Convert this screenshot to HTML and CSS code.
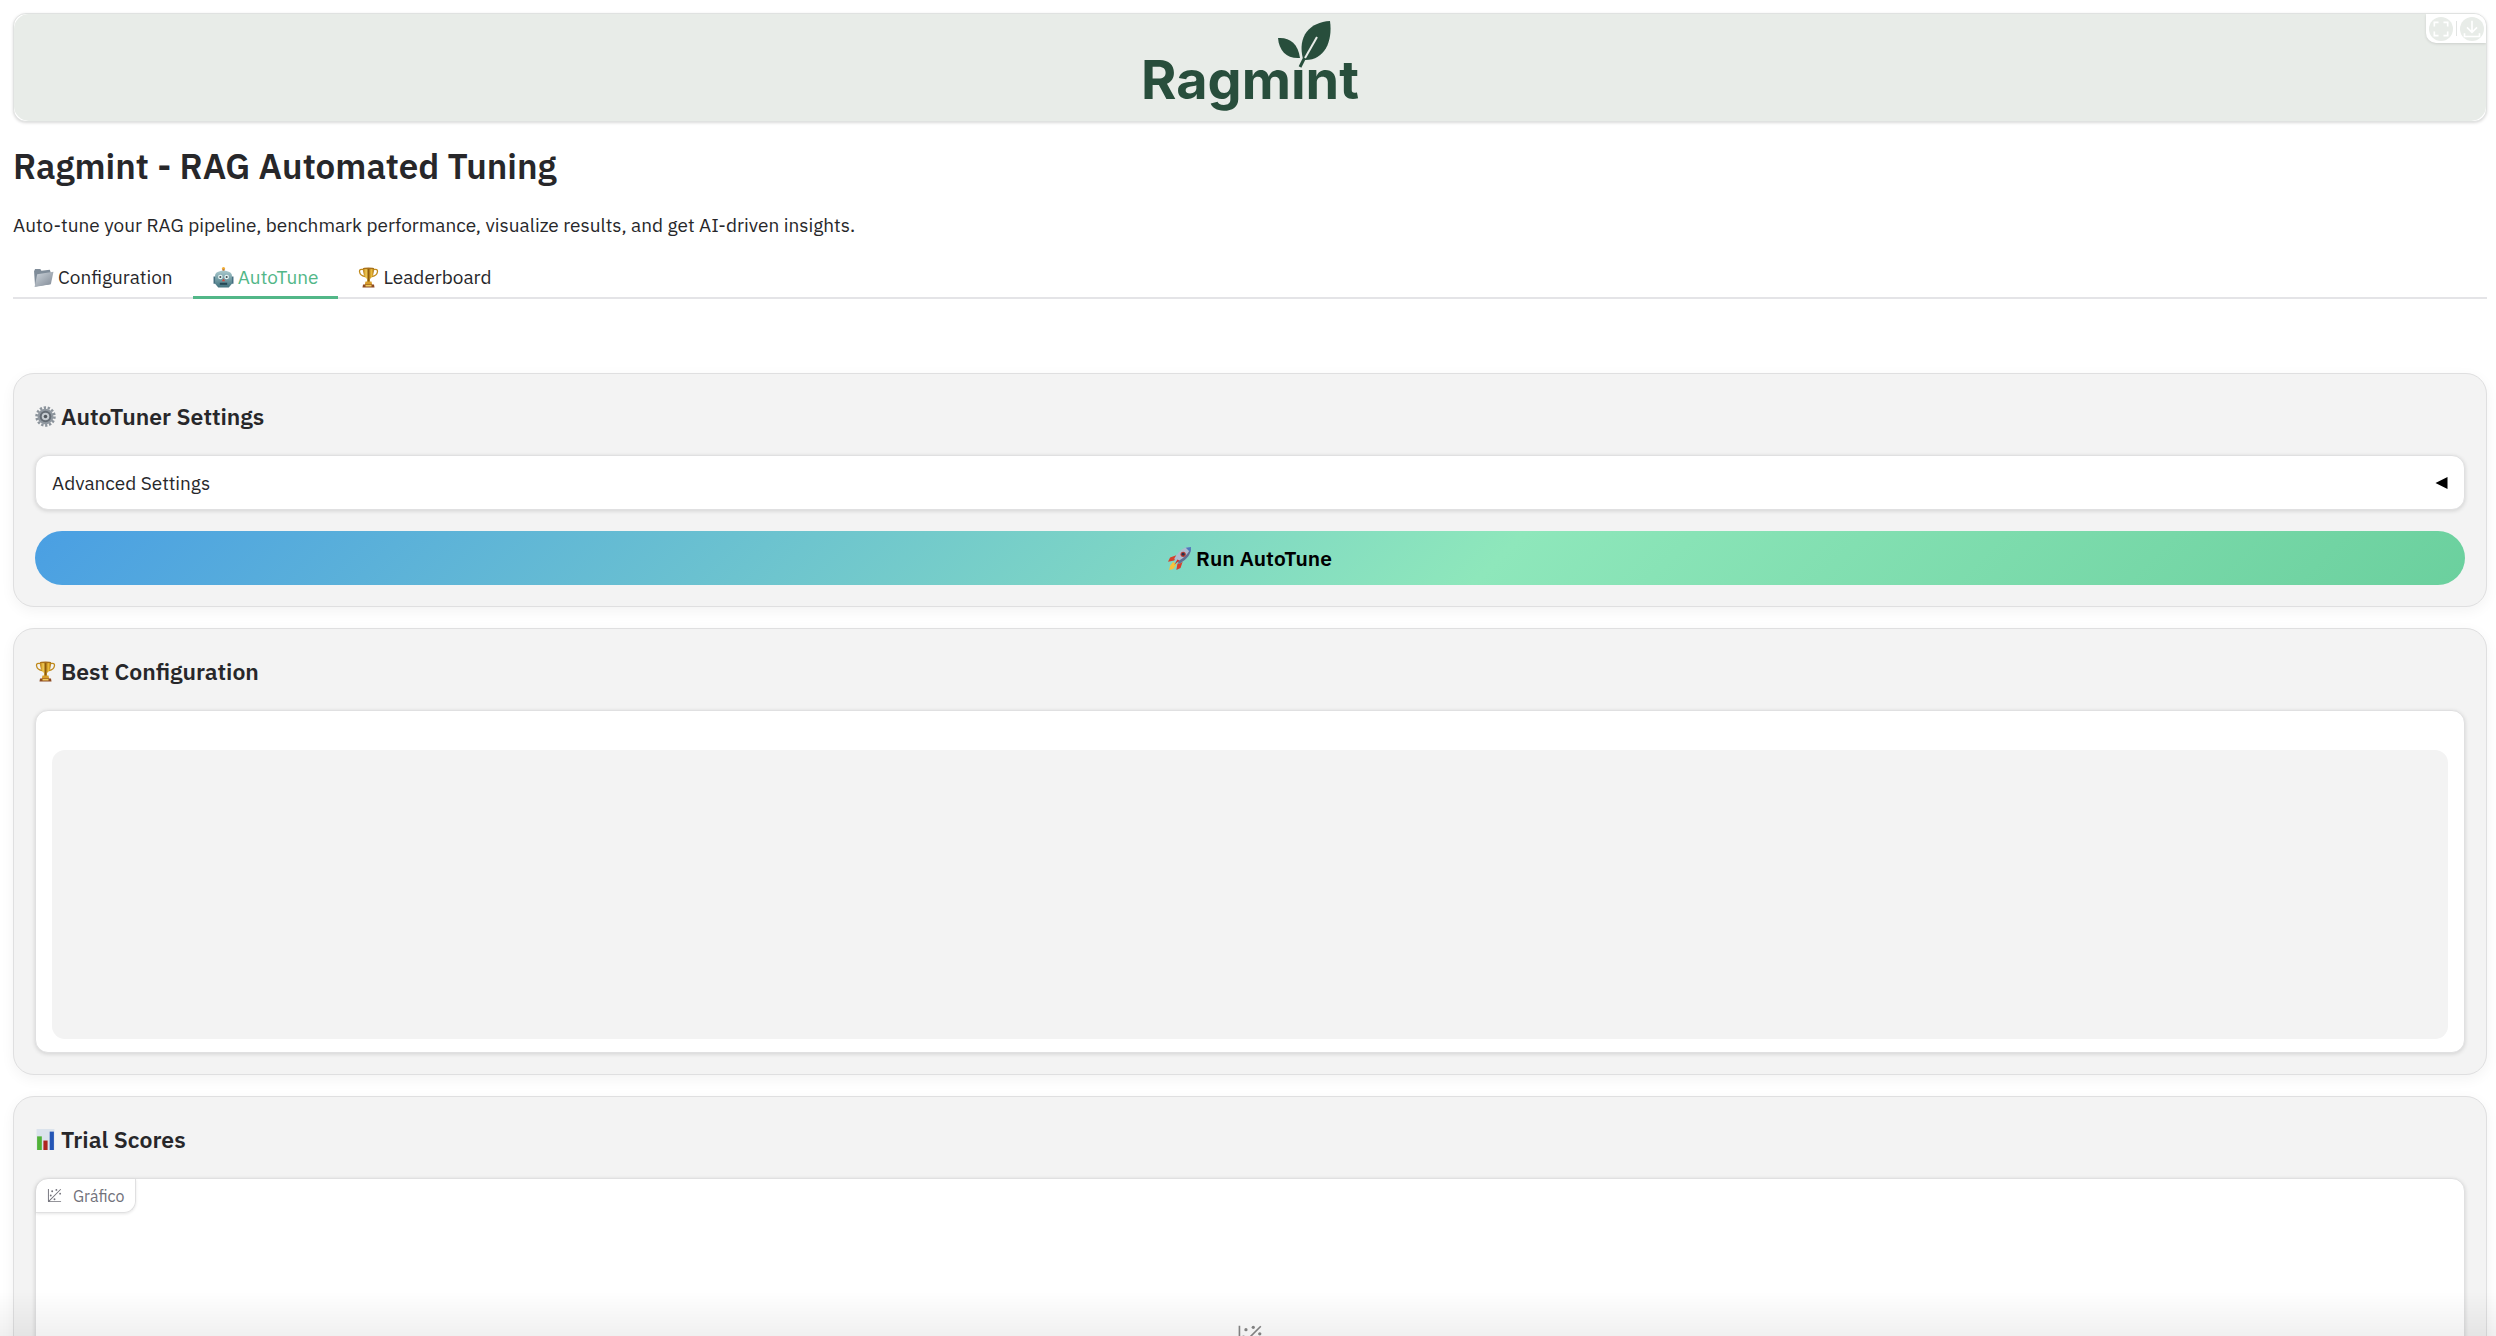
FILE: index.html
```html
<!DOCTYPE html>
<html lang="en">
<head>
    <meta charset="UTF-8">
    <meta name="viewport" content="width=device-width, initial-scale=1.0">
    <title>Ragmint</title>
    <link rel="stylesheet" href="styles.css">
</head>
<body>
    <!-- shared icons -->
    <svg class="defs" width="0" height="0" aria-hidden="true">
        <defs>
            <linearGradient id="gold" x1="0" x2="1" y1="0" y2="0">
                <stop offset="0" stop-color="#b5770f"/>
                <stop offset="0.3" stop-color="#f5cf56"/>
                <stop offset="0.5" stop-color="#8d5a0c"/>
                <stop offset="0.75" stop-color="#efbf3c"/>
                <stop offset="1" stop-color="#a8700f"/>
            </linearGradient>
            <linearGradient id="steel" x1="0" x2="1" y1="0" y2="1">
                <stop offset="0" stop-color="#cfd6dd"/>
                <stop offset="1" stop-color="#7e8894"/>
            </linearGradient>
            <linearGradient id="teal" x1="0" x2="0" y1="0" y2="1">
                <stop offset="0" stop-color="#a9c9cd"/>
                <stop offset="1" stop-color="#41727e"/>
            </linearGradient>
        </defs>
        <symbol id="trophy" viewBox="0 0 20 21">
            <path d="M5 2.500C2 2 .8 2.600 1 4.500c.3 2.500 2.500 4.500 5.500 5M15 2.500c3-.5 4.200.1 4 2-.3 2.500-2.500 4.500-5.500 5" fill="none" stroke="#c08a1c" stroke-width="1.300"/>
            <path d="M4.500 1h11c.2 5-1 9-4 11v3h-3v-3c-3-2-4.200-6-4-11z" fill="url(#gold)"/>
            <ellipse cx="10" cy="1.300" rx="5.500" ry=".9" fill="#a8701a"/>
            <path d="M7 14.500h6l.8 3.500H6.200z" fill="#d79d2a"/>
            <path d="M4.500 17.500h11l.5 3H4z" fill="#8d4b22"/>
            <path d="M7 18h6v1.500H7z" fill="#f0cc5d"/>
        </symbol>
        <symbol id="plot" viewBox="0 0 32 32">
            <circle cx="20" cy="4" r="2" fill="currentColor"/>
            <circle cx="8" cy="16" r="2" fill="currentColor"/>
            <circle cx="28" cy="12" r="2" fill="currentColor"/>
            <circle cx="11" cy="7" r="2" fill="currentColor"/>
            <circle cx="16" cy="24" r="2" fill="currentColor"/>
            <path fill="currentColor" d="M30 3.413 28.586 2 4 26.585V2H2v26a2 2 0 0 0 2 2h26v-2H5.413Z"/>
        </symbol>
    </svg>

    <main class="app">
        <header class="banner">
            <div class="logo">
                <span>Ragm&#305;nt</span>
                <svg class="leaf" viewBox="0 0 56 48" aria-hidden="true">
                    <path d="M1 18c11-1 20 5 22 20C10 39 2 31 1 18z"/>
                    <path d="M53 1C33 2 20 16 26 39l1 1c20 1 29-18 26-39z"/>
                    <path d="M27 39l-4 8" stroke="#284e3c" stroke-width="3"/>
                    <path d="M28 38L40 17" stroke="#e8ece8" stroke-width="2"/>
                </svg>
            </div>
            <div class="toolbar">
                <button type="button" aria-label="Fullscreen">
                    <svg viewBox="0 0 24 24"><path d="M4 9V4h5M15 4h5v5M20 15v5h-5M9 20H4v-5"/></svg>
                </button>
                <span class="divider"></span>
                <button type="button" aria-label="Download">
                    <svg viewBox="0 0 24 24"><path d="M12 2v14M6 10l6 6 6-6M3 17v4h18v-4"/></svg>
                </button>
            </div>
        </header>

        <h1>Ragmint - RAG Automated Tuning</h1>
        <p class="intro">Auto-tune your RAG pipeline, benchmark performance, visualize results, and get AI-driven insights.</p>

        <nav class="tabs" role="tablist">
            <button type="button" class="tab" role="tab">
                <svg class="emoji" viewBox="0 0 20 20" aria-hidden="true">
                    <path d="M1 4l1-2h5l1 1.500 8-1 1 3-1 11-14 2z" fill="#7f8c99"/>
                    <path d="M4 7l15.500-2.500-2.500 12L1.500 19z" fill="url(#steel)"/>
                </svg>
                Configuration
            </button>
            <button type="button" class="tab selected" role="tab" aria-selected="true">
                <svg class="emoji" viewBox="0 0 20 20" aria-hidden="true">
                    <circle cx="10" cy="1.500" r="1.500" fill="#f0ae35"/>
                    <path d="M9 2h2v3H9z" fill="#bd7a48"/>
                    <path d="M.5 9H3v7H.5zM17 9h2.500v7H17z" fill="#456f80"/>
                    <path d="M2 8c0-6 16-6 16 0v8l-3 3.500H5L2 16z" fill="url(#teal)"/>
                    <circle cx="7" cy="9.500" r="2.200" fill="#e6f4f4"/>
                    <circle cx="13" cy="9.500" r="2.200" fill="#e6f4f4"/>
                    <circle cx="7" cy="9.500" r="1" fill="#3f4b50"/>
                    <circle cx="13" cy="9.500" r="1" fill="#3f4b50"/>
                    <path d="M10 11l1.500 2.500h-3z" fill="#d6493b"/>
                    <path d="M6.500 15h7v2h-7z" fill="#244955"/>
                </svg>
                AutoTune
            </button>
            <button type="button" class="tab" role="tab">
                <svg class="emoji" aria-hidden="true"><use href="#trophy"/></svg>
                Leaderboard
            </button>
        </nav>

        <section class="card">
            <h2>
                <svg class="emoji" viewBox="0 0 20 20" aria-hidden="true">
                    <circle cx="10" cy="10" r="8.500" fill="none" stroke="#8b939b" stroke-width="2.500" stroke-dasharray="2.200 1.610"/>
                    <circle cx="10" cy="10" r="7.500" fill="#8f979f"/>
                    <circle cx="10" cy="10" r="5.500" fill="#646c74"/>
                    <circle cx="10" cy="10" r="3.600" fill="#c5cbd0"/>
                    <circle cx="10" cy="10" r="1.700" fill="#50565c"/>
                </svg>
                AutoTuner Settings
            </h2>
            <button type="button" class="block accordion" aria-expanded="false">
                <span>Advanced Settings</span>
                <svg class="arrow" viewBox="0 0 12 12" aria-hidden="true"><path d="M0 6L12 0v12z"/></svg>
            </button>
            <button type="button" class="run">
                <svg class="emoji" viewBox="0 0 22 22" aria-hidden="true">
                    <path d="M8 8L2 10l-2 4 6-1zM14 14l-2 6-4 2 1-6z" fill="#d5402c"/>
                    <path d="M5 14l3 3-3 4-4 1 1-4z" fill="#f5c33d"/>
                    <path d="M22 0c-7 0-11 3-16 11l5 5C19 11 22 7 22 0z" fill="#aebccf"/>
                    <path d="M22 0c0 7-3 11-11 16l-2-2C16 10 20 6 22 0z" fill="#5d7193"/>
                    <path d="M22 0l-5 .7L21.300 5z" fill="#4c79bd"/>
                    <circle cx="14.500" cy="7" r="2.500" fill="#b93a31"/>
                    <circle cx="14.500" cy="7" r="1.400" fill="#28324d"/>
                    <path d="M9 12l2 1-5 4z" fill="#cf3329"/>
                </svg>
                Run AutoTune
            </button>
        </section>

        <section class="card">
            <h2>
                <svg class="emoji" aria-hidden="true"><use href="#trophy"/></svg>
                Best Configuration
            </h2>
            <div class="block result">
                <div class="code"></div>
            </div>
        </section>

        <section class="card">
            <h2>
                <svg class="emoji" viewBox="0 0 20 20" aria-hidden="true">
                    <path d="M1.500 0h17v20h-17z" fill="#dbe3ec"/>
                    <path d="M2 7h4.500v13H2z" fill="#51b238"/>
                    <path d="M8 11h4v9H8z" fill="#ae261f"/>
                    <path d="M14 2.500h4V20h-4z" fill="#2455b5"/>
                </svg>
                Trial Scores
            </h2>
            <div class="block plot">
                <div class="block-label">
                    <svg aria-hidden="true"><use href="#plot"/></svg>
                    Gráfico
                </div>
                <svg class="plot-empty" aria-hidden="true"><use href="#plot"/></svg>
            </div>
        </section>
    </main>
</body>
</html>
```
FILE: styles.css
```css
* {
    box-sizing: border-box;
}

body {
    height: 100vh;
    margin: 0;
    overflow: hidden;
    background-color: #fff;
    color: #27272a;
    font-family: "IBM Plex Sans", Roboto, sans-serif;
    font-size: 19px;
    line-height: 28px;
}

/* fade along the bottom edge of the window */
body::after {
    content: "";
    position: fixed;
    left: 0;
    right: 0;
    bottom: 0;
    height: 44px;
    background: linear-gradient(rgba(0, 0, 0, 0), rgba(0, 0, 0, 0.06));
    pointer-events: none;
}

button {
    border: none;
    background: none;
    color: inherit;
    font: inherit;
    cursor: pointer;
}

.defs {
    position: absolute;
}

.app {
    display: flex;
    flex-direction: column;
    padding: 13px 9px 0 13px;
}

.banner {
    position: relative;
    display: flex;
    justify-content: center;
    height: 109px;
    border: 1px solid #e0e2e1;
    border-radius: 13px;
    background-color: #fff;
    box-shadow: 0 1px 3px rgba(0, 0, 0, 0.15);
    overflow: hidden;
}

.banner::before {
    content: "";
    position: absolute;
    inset: 0;
    border-radius: 15px;
    background-color: #e8ece8;
}

.logo {
    position: relative;
    padding-top: 31px;
    color: #284e3c;
    font-family: Inter, sans-serif;
    font-size: 54px;
    font-weight: 700;
    line-height: 70px;
}

.leaf {
    position: absolute;
    top: 6px;
    right: 26px;
    width: 56px;
    height: 48px;
    fill: #284e3c;
}

.toolbar {
    position: absolute;
    top: 0;
    right: 0;
    display: flex;
    align-items: center;
    gap: 3px;
    height: 29px;
    padding: 0 2px 0 3px;
    border-bottom-left-radius: 10px;
    background-color: #fff;
    box-shadow: 0 1px 3px rgba(0, 0, 0, 0.12);
}

.toolbar button {
    width: 24px;
    height: 24px;
    padding: 2px;
    border-radius: 50%;
    background-color: #e8ece8;
}

.toolbar svg {
    display: block;
    fill: none;
    stroke: #fff;
    stroke-width: 2;
}

.divider {
    width: 1px;
    height: 15px;
    background-color: #e2e4e3;
}

h1 {
    margin: 21px 0 0;
    font-size: 35px;
    font-weight: 600;
    line-height: 46px;
}

.intro {
    margin: 22px 0 0;
}

.tabs {
    display: flex;
    margin-top: 16px;
    border-bottom: 2px solid #e4e4e7;
}

.tab {
    display: flex;
    align-items: center;
    gap: 4px;
    height: 44px;
    margin-bottom: -2px;
    padding: 0 20px;
}

.selected {
    border-bottom: 3px solid #52b788;
    padding-top: 3px;
    color: #52b788;
}

.emoji {
    width: 21px;
    height: 21px;
    flex: none;
}

.card {
    display: flex;
    flex-direction: column;
    gap: 21px;
    margin-bottom: 21px;
    padding: 21px;
    border: 1px solid #dfdfe0;
    border-radius: 21px;
    background-color: #f3f3f3;
    box-shadow: 0 4px 14px rgba(0, 0, 0, 0.05);
}

.tabs + .card {
    margin-top: 74px;
}

h2 {
    display: flex;
    align-items: center;
    gap: 5px;
    margin: 0;
    padding: 6px 0 3px;
    font-size: 23px;
    font-weight: 600;
    line-height: 30px;
}

.block {
    border: 1px solid #e0e0e1;
    border-radius: 13px;
    background-color: #fff;
    box-shadow: 0 1px 4px rgba(0, 0, 0, 0.14);
}

.accordion {
    display: flex;
    align-items: center;
    justify-content: space-between;
    height: 55px;
    padding: 0 16px;
}

.arrow {
    width: 13px;
    height: 12px;
}

.run {
    display: flex;
    align-items: center;
    justify-content: center;
    gap: 5px;
    height: 54px;
    border-radius: 27px;
    background: linear-gradient(135deg, #4a9fe3, #8ee7bb 60%, #6bd09e);
    color: #000;
    font-size: 21px;
    font-weight: 600;
}

.run .emoji {
    width: 23px;
    height: 23px;
}

.result {
    padding: 39px 16px 13px;
}

.code {
    height: 289px;
    border-radius: 13px;
    background-color: #f3f3f3;
}

.plot {
    display: flex;
    flex-direction: column;
    height: 318px;
}

.block-label {
    display: flex;
    align-items: center;
    align-self: flex-start;
    gap: 11px;
    height: 34px;
    padding: 0 11px;
    border: solid #e0e0e1;
    border-width: 0 1px 1px 0;
    border-radius: 12px 0;
    box-shadow: 0 1px 3px rgba(0, 0, 0, 0.1);
    color: #71717a;
    font-size: 16px;
}

.block-label svg {
    width: 15px;
    height: 15px;
}

.plot-empty {
    width: 26px;
    height: 26px;
    margin: 111px auto 0;
    color: #888;
}
```
